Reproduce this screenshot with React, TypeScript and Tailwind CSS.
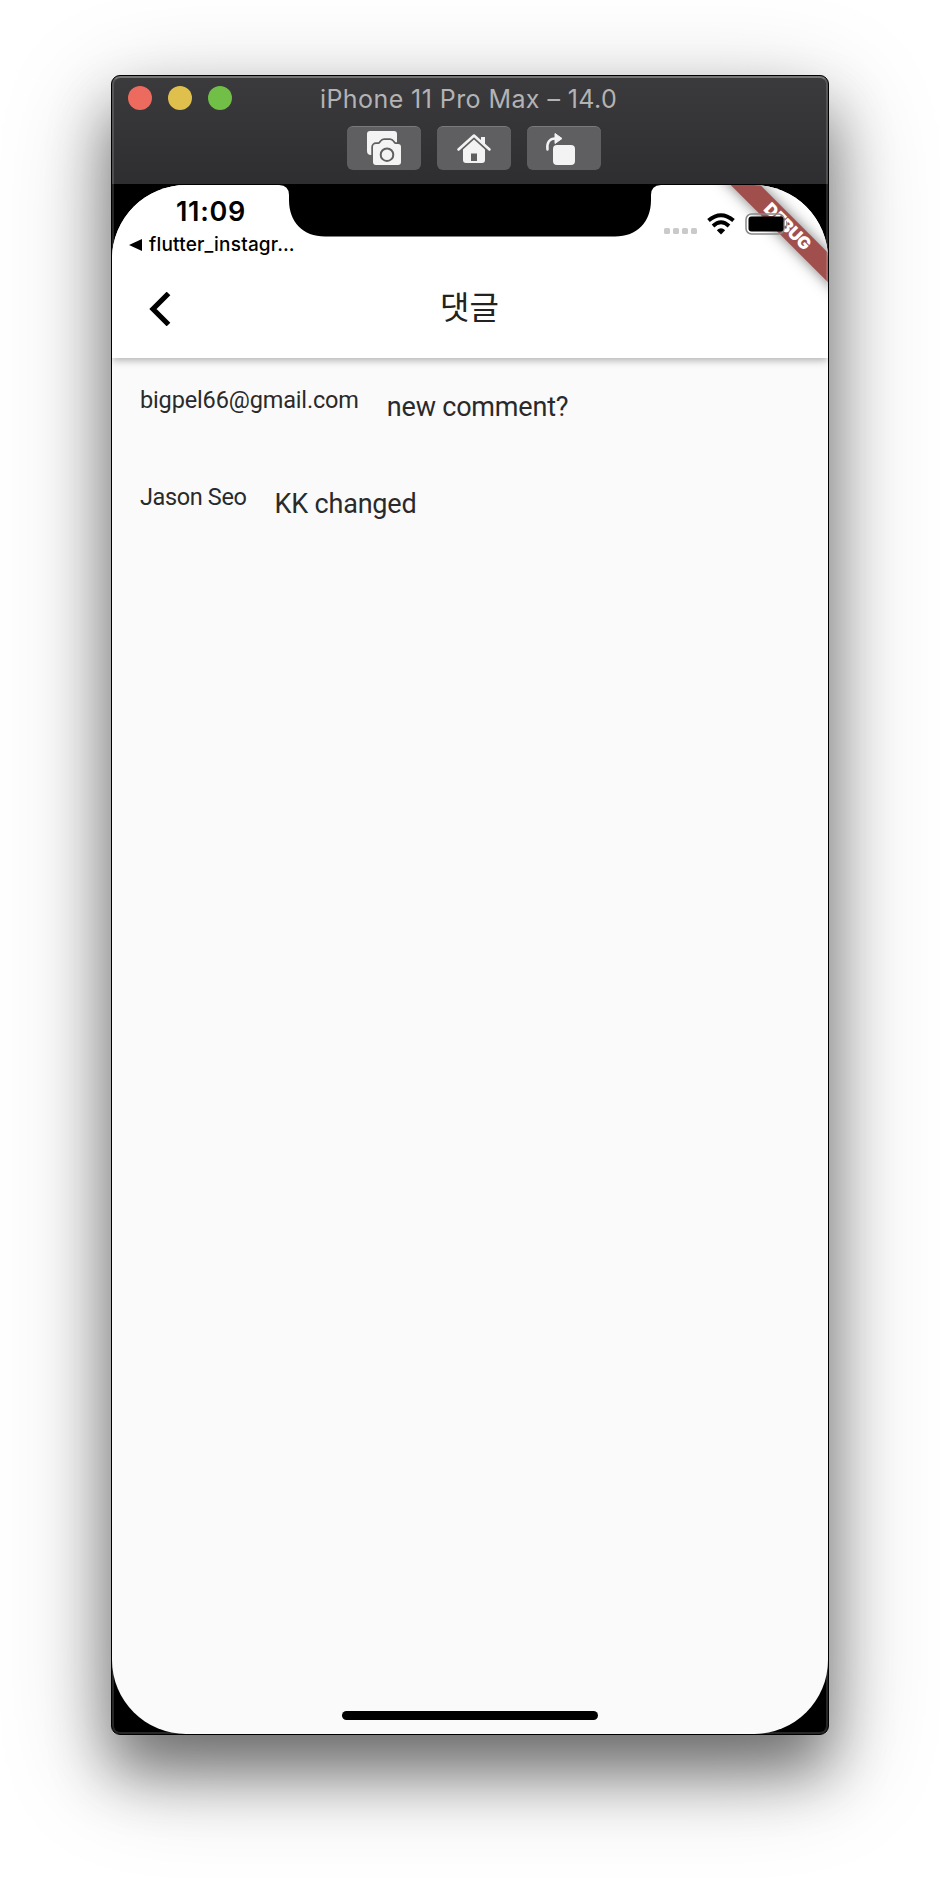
import React from "react";

function ToolbarButton({ children }: { children: React.ReactNode }) {
  return (
    <div className="h-11 w-[74px] overflow-hidden rounded-[6px] border-t border-[#7a7a7b] bg-[#5f5f61]">
      <svg viewBox="0 0 74 43" className="block h-[43px] w-[74px]">
        {children}
      </svg>
    </div>
  );
}

function TitleBar() {
  return (
    <header className="flex h-[108px] shrink-0 flex-col bg-gradient-to-b from-[#3b3b3d] to-[#2e2e30]">
      <div className="grid h-[50px] grid-cols-[208px_296px_1fr] pt-2.5">
        <div className="flex gap-4 pl-4">
          <span className="size-6 rounded-full bg-[#ed6a5e]" />
          <span className="size-6 rounded-full bg-[#e0c04d]" />
          <span className="size-6 rounded-full bg-[#71bf47]" />
        </div>
        <h1 className="whitespace-nowrap font-['Inter'] text-[25px] leading-[26px] tracking-[0.42px] text-[#b3b3b5]">
          iPhone 11 Pro Max – 14.0
        </h1>
      </div>
      <div className="flex gap-4 pl-[235px]">
        <ToolbarButton>
          <path d="M23 4h24a3 3 0 0 1 3 3v15H31v6h-7a4 4 0 0 1-4-4V7a3 3 0 0 1 3-3Z" fill="#f3f3f4" />
          <path d="M29 17h2.500c2 0 2.500-4 5.500-4h6c3 0 3.500 4 5.500 4H51a3 3 0 0 1 3 3v15a3 3 0 0 1-3 3H29a3 3 0 0 1-3-3V20a3 3 0 0 1 3-3Z" fill="#f3f3f4" stroke="#5f5f61" strokeWidth="3.500" paintOrder="stroke" />
          <circle cx="40" cy="27.700" r="6.300" fill="none" stroke="#5f5f61" strokeWidth="2" />
        </ToolbarButton>
        <ToolbarButton>
          <path d="M21.500 22.500 37 8.500l15.500 14" fill="none" stroke="#f3f3f4" strokeWidth="2.600" strokeLinecap="round" strokeLinejoin="round" />
          <path d="M44 10h4v9l-4-4Z" fill="#f3f3f4" />
          <path d="M37 12.500 48 22.500V33a3 3 0 0 1-3 3H29a3 3 0 0 1-3-3V22.500Z" fill="#f3f3f4" />
          <path d="M34 26.500h6V34h-6Z" fill="#5f5f61" />
        </ToolbarButton>
        <ToolbarButton>
          <rect x="26" y="18" width="22" height="20" rx="4" fill="#f3f3f4" />
          <path d="M20.500 22.500c-1-7 2-11 8-11" fill="none" stroke="#f3f3f4" strokeWidth="2.500" strokeLinecap="round" />
          <path d="M28 6.500 35 11.500 28 16.500Z" fill="#f3f3f4" stroke="#f3f3f4" strokeLinejoin="round" />
        </ToolbarButton>
      </div>
    </header>
  );
}

function DebugBanner() {
  return (
    <div className="absolute right-0 top-0 size-[130px] overflow-hidden">
      <div className="absolute left-[-10px] top-[32px] flex h-[21px] w-[200px] rotate-45 items-center justify-center bg-[#a04f4d] pr-0.5 font-['Inter'] text-[17px] font-black leading-none tracking-[-0.2px] text-white shadow-[0_0_14px_rgba(0,0,0,0.5)]">
        DEBUG
      </div>
    </div>
  );
}

function StatusBar() {
  return (
    <div className="flex h-[80px] justify-between">
      <div className="w-[190px] pl-[17px] pt-[14px] font-['Inter'] text-black">
        <div className="pl-[47px] text-[27px] font-semibold leading-[26px] tracking-[0.7px]">11:09</div>
        <div className="flex items-center gap-[7px] pt-[8px]">
          <svg viewBox="0 0 13 12" className="h-3 w-[13px] shrink-0">
            <path d="M0 6 13 0v12Z" />
          </svg>
          <span className="whitespace-nowrap text-[19px] font-medium leading-[24px] tracking-[0.2px]">flutter_instagr…</span>
        </div>
      </div>
      <div className="relative flex gap-[10px] pr-[40px] pt-[28px]">
        <svg viewBox="0 0 33 6" className="mt-[15px] h-1.5 w-[33px]" fill="#cacaca">
          <rect width="6" height="6" rx="1.500" />
          <rect x="9" width="6" height="6" rx="1.500" />
          <rect x="18" width="6" height="6" rx="1.500" />
          <rect x="27" width="6" height="6" rx="1.500" />
        </svg>
        <svg viewBox="0 0 28 22" className="h-[22px] w-7">
          <path d="M1.500 7.500Q14-3 26.500 7.500" fill="none" stroke="#000" strokeWidth="4" />
          <path d="M6 13Q14 5.500 22 13" fill="none" stroke="#000" strokeWidth="3.800" />
          <path d="M9.800 17.300Q14 13 18.200 17.300L14 21.500Z" />
        </svg>
        <svg viewBox="0 0 43 22" className="h-[22px] w-[43px]">
          <rect x="1" y="1" width="38" height="20" rx="5.500" fill="none" stroke="#888" strokeWidth="1.500" />
          <rect x="3.500" y="3.500" width="35" height="15" rx="3" />
          <path d="M41 7.500c2.500 1.500 2.500 5.500 0 7Z" fill="#999" />
        </svg>
      </div>
    </div>
  );
}

interface CommentProps {
  author: string;
  text: string;
  authorClass: string;
}

function Comment({ author, text, authorClass }: CommentProps) {
  return (
    <li className="flex h-[97px] items-start gap-[28px] pl-[28px] pt-[28px] font-['Roboto'] text-[#2a2a2a]">
      <span className={`pt-px text-[23.5px] leading-[27px] ${authorClass}`}>{author}</span>
      <span className="pt-[6px] text-[27px] leading-[30px] tracking-[-0.2px]">{text}</span>
    </li>
  );
}

export default function App() {
  return (
    <main className="h-[1882px] w-[940px] overflow-hidden bg-white pl-[111px] pt-[75px]">
      <div className="h-[1660px] w-[718px] rounded-[9px] shadow-[0_36px_60px_rgba(0,0,0,0.45),0_30px_110px_rgba(0,0,0,0.28)]">
        <div className="relative flex h-full w-full flex-col overflow-hidden rounded-[9px] border border-black bg-black">
          <TitleBar />
          <div className="relative mt-px flex grow flex-col overflow-hidden rounded-[74px] bg-[#fafafa]">
            <section className="relative z-10 h-[173px] shrink-0 bg-white shadow-[0_2px_8px_rgba(0,0,0,0.32)]">
              <DebugBanner />
              <svg viewBox="0 0 382 52" className="absolute left-[167px] top-0 h-[52px] w-[382px]">
                <path d="M0 0Q10 .5 10 10V15C10 37 24 51.500 46 51.500H336C358 51.500 372 37 372 15V10Q372 .5 382 0Z" />
              </svg>
              <StatusBar />
              <div className="grid h-[88px] grid-cols-3 items-center px-[37px]">
                <svg viewBox="0 0 22 34" className="h-[34px] w-[22px]">
                  <path d="M19.500 1.500 4 17l15.500 15.500" fill="none" stroke="#000" strokeWidth="5.200" />
                </svg>
                <h2 className="-mt-[9px] pr-px text-center font-['Noto_Sans_CJK_KR'] text-[32px] leading-[40px] text-[#222]">댓글</h2>
              </div>
            </section>
            <ul>
              <Comment author="bigpel66@gmail.com" text="new comment?" authorClass="tracking-[-0.15px]" />
              <Comment author="Jason Seo" text="KK changed" authorClass="tracking-[-0.37px]" />
            </ul>
            <div className="mx-auto mb-[14px] mt-auto h-[9px] w-[256px] rounded-full bg-black" />
          </div>
          <div className="pointer-events-none absolute inset-0 z-20 rounded-[8px] border-2 border-white/15 border-t-white/30" />
        </div>
      </div>
    </main>
  );
}
